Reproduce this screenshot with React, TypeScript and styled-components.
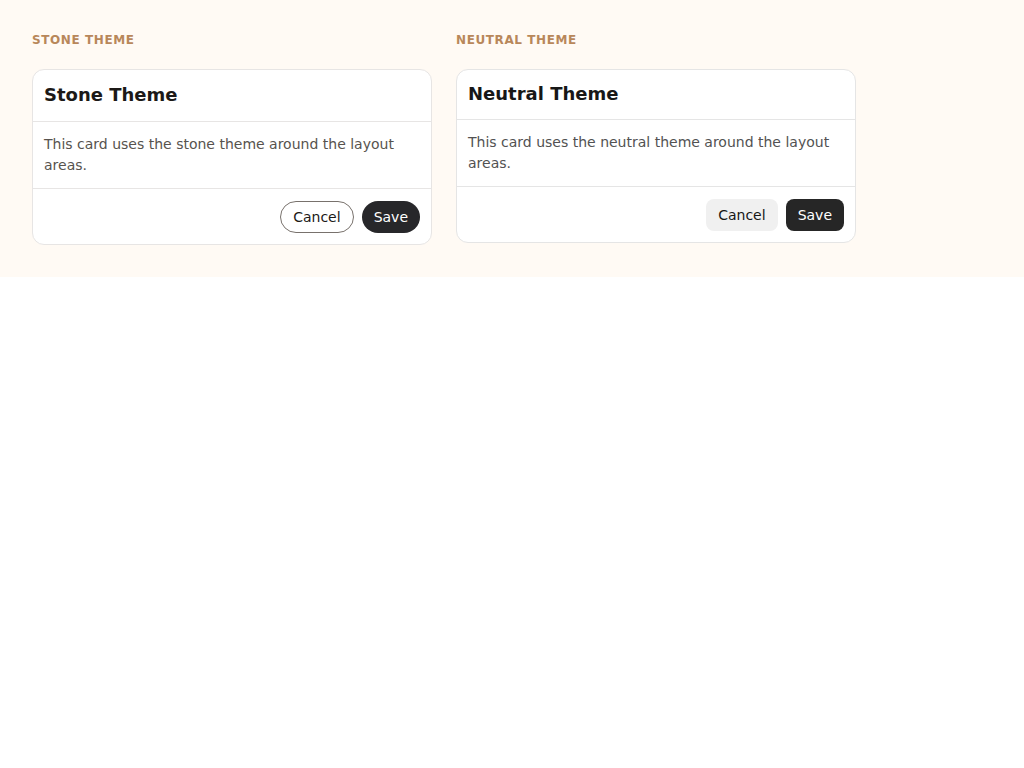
import React from "react";
import styled, { createGlobalStyle } from "styled-components";

const Global = createGlobalStyle`
  html, body { margin: 0; padding: 0; background: #ffffff; }
  body { font-family: "DejaVu Sans", "Noto Sans", sans-serif; }
`;

type Variant = "stone" | "neutral";

const palette = {
  stone: {
    border: "#e7e5e4",
    title: "#1c1917",
    text: "#57534e",
    save: "#27272a",
    cancelBg: "#ffffff",
    cancelBorder: "#78716c",
    cancelText: "#1c1917",
    radius: "999px",
    headerPad: "13px 11px 14px",
  },
  neutral: {
    border: "#e5e5e5",
    title: "#171717",
    text: "#525252",
    save: "#262626",
    cancelBg: "#f0f0f0",
    cancelBorder: "transparent",
    cancelText: "#171717",
    radius: "8px",
    headerPad: "12px 11px 13px",
  },
};

const Page = styled.div`
  background: #fffaf4;
  padding: 33px 32px 32px;
  display: flex;
  gap: 24px;
  align-items: flex-start;
`;

const Column = styled.section`
  width: 400px;
  display: flex;
  flex-direction: column;
  gap: 22px;
`;

const Label = styled.h2`
  margin: 0;
  font-size: 12px;
  line-height: 14px;
  font-weight: 700;
  letter-spacing: 0.6px;
  color: #b8875a;
  text-transform: uppercase;
`;

const Card = styled.div<{ $v: Variant }>`
  background: #ffffff;
  border: 1px solid ${(p) => palette[p.$v].border};
  border-radius: 12px;
  overflow: hidden;
`;

const Header = styled.div<{ $v: Variant }>`
  padding: ${(p) => palette[p.$v].headerPad};
  border-bottom: 1px solid ${(p) => palette[p.$v].border};
`;

const Title = styled.h3<{ $v: Variant }>`
  margin: 0;
  font-size: 18px;
  line-height: 24px;
  font-weight: 700;
  color: ${(p) => palette[p.$v].title};
`;

const Body = styled.p<{ $v: Variant }>`
  margin: 0;
  padding: 12px 11px 12px;
  border-bottom: 1px solid ${(p) => palette[p.$v].border};
  font-size: 14px;
  line-height: 21px;
  color: ${(p) => palette[p.$v].text};
`;

const Footer = styled.div`
  padding: 12px 11px 11px;
  display: flex;
  justify-content: flex-end;
  gap: 8px;
`;

const Button = styled.button<{ $v: Variant; $primary?: boolean }>`
  height: 32px;
  padding: 0 12px;
  font-family: inherit;
  font-size: 14px;
  border-radius: ${(p) => palette[p.$v].radius};
  cursor: pointer;
  background: ${(p) => (p.$primary ? palette[p.$v].save : palette[p.$v].cancelBg)};
  color: ${(p) => (p.$primary ? "#ffffff" : palette[p.$v].cancelText)};
  border: ${(p) =>
    p.$primary || p.$v === "neutral" ? "none" : `1px solid ${palette[p.$v].cancelBorder}`};
`;

function ThemeCard({ v, name }: { v: Variant; name: string }) {
  const description = `This card uses the ${name.toLowerCase()} theme around the layout areas.`;
  return (
    <Column>
      <Label>{`${name} theme`}</Label>
      <Card $v={v}>
        <Header $v={v}>
          <Title $v={v}>{`${name} Theme`}</Title>
        </Header>
        <Body $v={v}>{description}</Body>
        <Footer>
          <Button $v={v}>Cancel</Button>
          <Button $v={v} $primary>
            Save
          </Button>
        </Footer>
      </Card>
    </Column>
  );
}

export default function App() {
  return (
    <>
      <Global />
      <Page>
        <ThemeCard v="stone" name="Stone" />
        <ThemeCard v="neutral" name="Neutral" />
      </Page>
    </>
  );
}
